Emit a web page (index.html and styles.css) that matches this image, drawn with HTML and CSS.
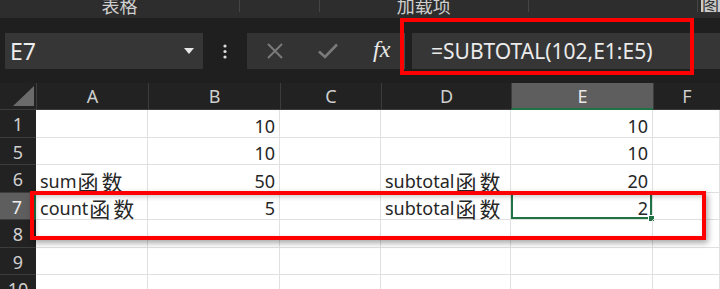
FILE: index.html
```html
<!DOCTYPE html>
<html lang="zh-CN">
<head>
    <meta charset="UTF-8">
    <title>SUBTOTAL</title>
    <link rel="stylesheet" href="styles.css">
</head>
<body>
    <div class="ribbon">
        <div class="group g1"><span>表格</span></div>
        <div class="group g2"></div>
        <div class="group g3"><span>加载项</span></div>
        <div class="group g4"></div>
        <div class="group g5"><span class="pic">图</span></div>
    </div>

    <div class="formula-bar">
        <div class="name-box">
            <span>E7</span>
            <svg width="10" height="6" viewBox="0 0 10 6"><path d="M0 0 L10 0 L5 6 Z" fill="#e6e6e6"/></svg>
        </div>
        <div class="more">
            <svg width="4" height="15" viewBox="0 0 4 15"><circle cx="2" cy="2" r="1.6" fill="#ddd"/><circle cx="2" cy="7.5" r="1.6" fill="#ddd"/><circle cx="2" cy="13" r="1.6" fill="#ddd"/></svg>
        </div>
        <div class="actions">
            <svg class="ico-x" width="16" height="16" viewBox="0 0 16 16"><path d="M1 1 L15 15 M15 1 L1 15" stroke="#7a7a7a" stroke-width="2"/></svg>
            <svg class="ico-ok" width="20" height="16" viewBox="0 0 20 16"><path d="M1 8.5 L7 14 L19 1.5" stroke="#7a7a7a" stroke-width="2.6" fill="none"/></svg>
            <span class="fx">fx</span>
        </div>
        <div class="formula">=SUBTOTAL(102,E1:E5)</div>
    </div>

    <div class="sheet">
        <div class="corner"><i></i></div>
        <div class="col-h">A</div>
        <div class="col-h">B</div>
        <div class="col-h">C</div>
        <div class="col-h">D</div>
        <div class="col-h active">E</div>
        <div class="col-h">F</div>

        <div class="row-h">1</div>
        <div class="cell"></div><div class="cell num">10</div><div class="cell"></div><div class="cell"></div><div class="cell num">10</div><div class="cell"></div>

        <div class="row-h">5</div>
        <div class="cell"></div><div class="cell num">10</div><div class="cell"></div><div class="cell"></div><div class="cell num">10</div><div class="cell"></div>

        <div class="row-h">6</div>
        <div class="cell">sum<span class="cjk">函数</span></div><div class="cell num">50</div><div class="cell"></div><div class="cell">subtotal<span class="cjk">函数</span></div><div class="cell num">20</div><div class="cell"></div>

        <div class="row-h active">7</div>
        <div class="cell">count<span class="cjk">函数</span></div><div class="cell num">5</div><div class="cell"></div><div class="cell">subtotal<span class="cjk">函数</span></div><div class="cell num sel">2</div><div class="cell"></div>

        <div class="row-h">8</div>
        <div class="cell"></div><div class="cell"></div><div class="cell"></div><div class="cell"></div><div class="cell"></div><div class="cell"></div>

        <div class="row-h">9</div>
        <div class="cell"></div><div class="cell"></div><div class="cell"></div><div class="cell"></div><div class="cell"></div><div class="cell"></div>

        <div class="row-h">10</div>
        <div class="cell"></div><div class="cell"></div><div class="cell"></div><div class="cell"></div><div class="cell"></div><div class="cell"></div>
    </div>

    <!-- annotation frames drawn over the screenshot -->
    <div class="mark mark-formula"></div>
    <div class="mark mark-row"></div>
</body>
</html>
```

FILE: styles.css
```css
body {
    margin: 0;
    background: #1f1f1f;
    font-family: "Noto Sans", "Noto Sans CJK SC", sans-serif;
    position: relative;
    height: 289px;
    overflow: hidden;
}

.ribbon {
    display: flex;
    height: 18px;
    background: #2d2d2d;
    color: #cfcfcf;
    font-size: 18px;
    overflow: hidden;
}

.group {
    position: relative;
    display: flex;
    justify-content: center;
    border-right: 1px solid #454545;
    height: 12px;
}

.group span {
    line-height: 18px;
    margin-top: -4px;
    font-family: "Noto Sans CJK SC", sans-serif;
}

.g1 { width: 240px; }
.g2 { width: 79px; }
.g3 { width: 209px; }
.g4 { width: 169px; }
.g5 { flex: 1; border-right: none; justify-content: flex-start; padding-left: 3px; }

.g5 .pic {
    background: #c9c9c9;
    color: #333;
    font-size: 17px;
    padding: 0 1px;
}

.formula-bar {
    display: flex;
    height: 36px;
    margin-top: 15px;
}

.name-box {
    width: 198px;
    margin-left: 5px;
    background: #363636;
    display: flex;
    align-items: center;
    justify-content: space-between;
    padding: 0 9px 0 5px;
    box-sizing: border-box;
    color: #ececec;
    font-size: 23px;
}

.more {
    width: 44px;
    display: flex;
    align-items: center;
    justify-content: center;
}

.actions {
    width: 158px;
    background: #333;
    display: flex;
    align-items: center;
    padding-left: 20px;
    box-sizing: border-box;
    border-right: 1px solid #4a4a4a;
}

.ico-x { margin-right: 35px; }
.ico-ok { margin-right: 35px; }

.fx {
    font-family: "Liberation Serif", serif;
    font-style: italic;
    font-size: 24px;
    color: #e8e8e8;
    margin-top: -3px;
}

.formula {
    flex: 1;
    margin-left: 7px;
    background: #363636;
    color: #ebebeb;
    font-size: 21px;
    line-height: 36px;
    padding-left: 19px;
}

.sheet {
    display: grid;
    grid-template-columns: 36px 112px 132px 101px 130px 142px 1fr;
    grid-template-rows: 27px repeat(7, 27.5px);
    margin-top: 14px;
    background: #fff;
}

.corner {
    background: #222;
    border-bottom: 1px solid #3c3c3c;
    position: relative;
}

.corner i {
    position: absolute;
    right: 2px;
    bottom: 3px;
    width: 0;
    height: 0;
    border-left: 21px solid transparent;
    border-bottom: 20px solid #6b6b6b;
}

.col-h {
    background: #222;
    color: #cfcfcf;
    font-size: 18px;
    display: flex;
    align-items: center;
    justify-content: center;
    border-left: 1px solid #3c3c3c;
    border-bottom: 1px solid #3c3c3c;
}

.col-h.active {
    background: #5e5e5e;
    border-bottom: 2px solid #217346;
    color: #e8e8e8;
}

.row-h {
    background: #222;
    color: #cfcfcf;
    font-size: 18px;
    display: flex;
    align-items: center;
    justify-content: center;
    border-bottom: 1px solid #3c3c3c;
    line-height: 1;
    padding-top: 2px;
}

.row-h.active {
    background: #5e5e5e;
    border-right: 2px solid #217346;
    color: #eee;
}

.cell {
    border-right: 1px solid #e0e0e0;
    border-bottom: 1px solid #e0e0e0;
    color: #262626;
    font-size: 18px;
    line-height: 22px;
    display: flex;
    align-items: flex-end;
    padding: 0 4px;
    white-space: nowrap;
    position: relative;
}

.cell.num { justify-content: flex-end; }

.cjk {
    display: inline-block;
    font-family: "Noto Sans CJK SC", sans-serif;
    font-size: 21px;
    letter-spacing: 3px;
    margin-left: 1px;
    line-height: 22px;
    height: 22px;
}

.cell.sel {
    box-shadow: inset 0 0 0 2px #217346;
}

.cell.sel::after {
    content: "";
    position: absolute;
    right: -3px;
    bottom: -3px;
    width: 5px;
    height: 5px;
    background: #217346;
    border: 1px solid #fff;
}

.mark {
    position: absolute;
    border: 4px solid #ff0000;
    box-sizing: border-box;
}

.mark-formula {
    left: 400px;
    top: 18px;
    width: 294px;
    height: 57px;
}

.mark-row {
    left: 30px;
    top: 191px;
    width: 676px;
    height: 49px;
    box-shadow: 2px 3px 6px rgba(0, 0, 0, 0.35), inset 2px 2px 5px rgba(0, 0, 0, 0.2);
}
```
